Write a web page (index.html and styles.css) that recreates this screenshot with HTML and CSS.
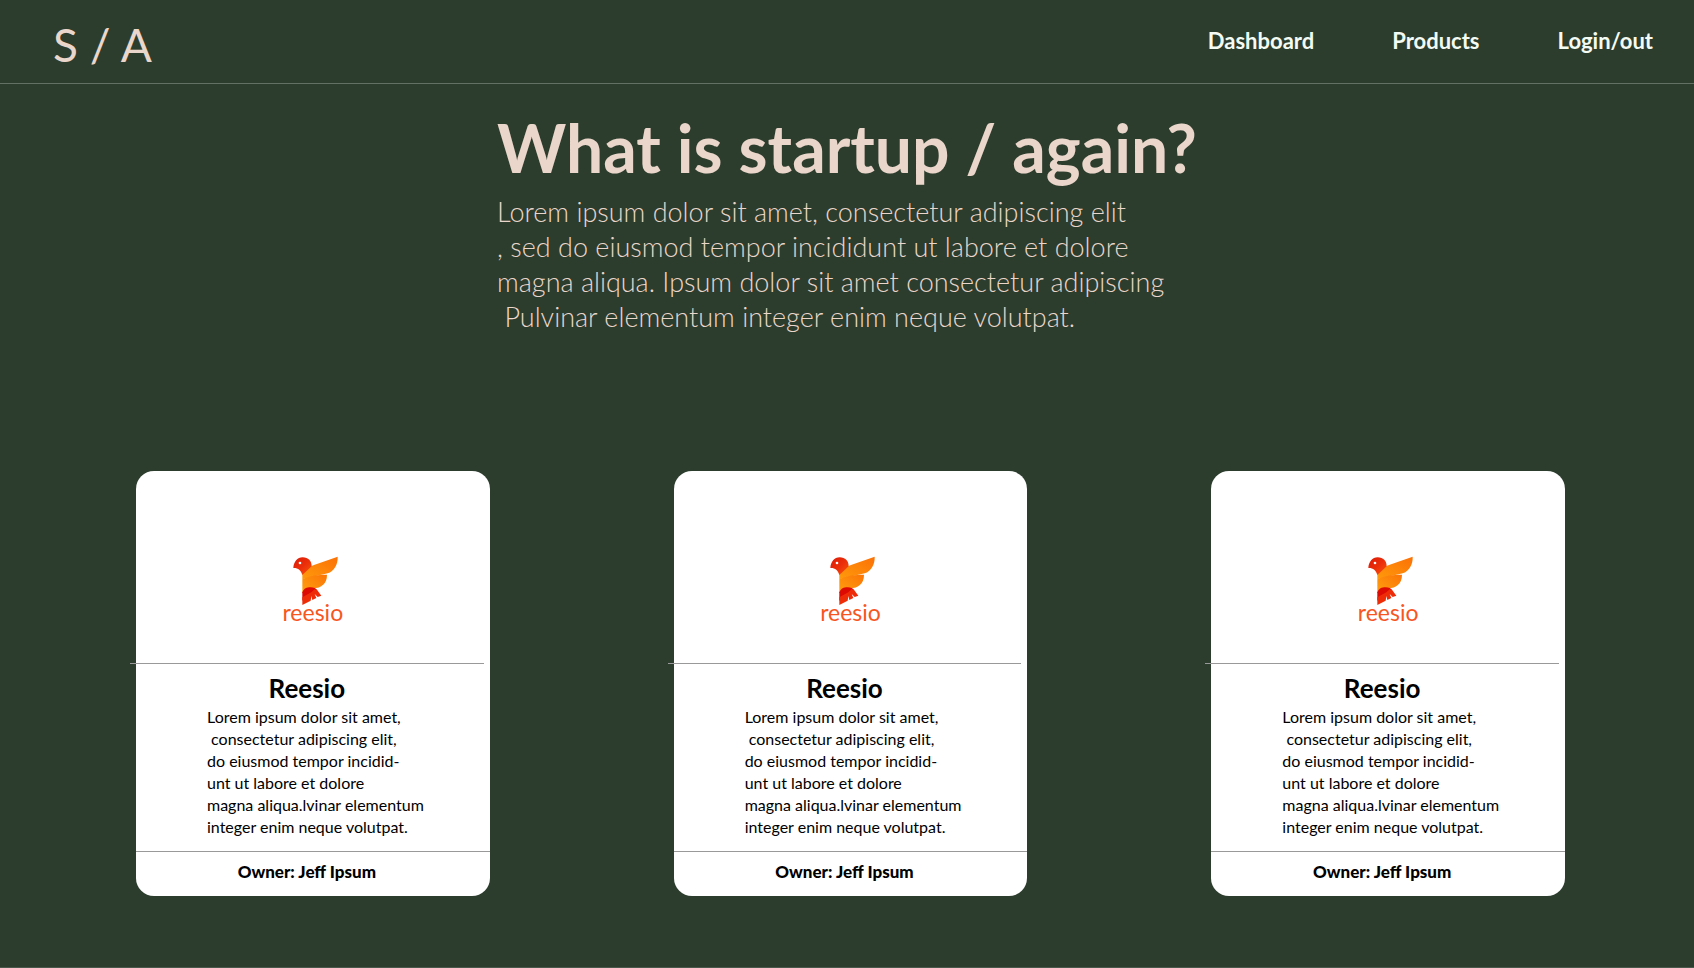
FILE: index.html
```html
<!DOCTYPE html>
<html lang="en">
<head>
<meta charset="utf-8">
<meta name="viewport" content="width=device-width, initial-scale=1">
<title>startup / again</title>
<link rel="stylesheet" href="styles.css">
</head>
<body>
<svg class="defs" width="0" height="0" aria-hidden="true">
  <defs>
    <linearGradient id="head" x1="0" y1="0" x2="1" y2="1"><stop offset="0" stop-color="#dd1a08"/><stop offset=".5" stop-color="#ea2e0a"/><stop offset="1" stop-color="#fb5708"/></linearGradient>
    <linearGradient id="wing" x1="0" y1="1" x2="1" y2="0"><stop offset="0" stop-color="#ff9a0c"/><stop offset="1" stop-color="#fb7106"/></linearGradient>
    <linearGradient id="body" x1="0" y1="1" x2="1" y2="0"><stop offset="0" stop-color="#ffa010"/><stop offset="1" stop-color="#fb7406"/></linearGradient>
    <symbol id="bird" viewBox="-5 18 180 147">
      <path fill="url(#wing)" d="M53 73 C62 60 72 50 88 45 L159 20 C160 44 148 64 129 70 L53 88Z"/>
      <path fill="url(#body)" d="M53 72 L53 130 C62 120 72 116 86 115 C110 114 127 101 127 74 C100 74 76 76 53 88Z"/>
      <path fill="url(#head)" d="M26 54 C27 36 38 22 54 22 C71 22 81 33 81 49 L53 75 C49 60 39 53 26 54Z"/>
      <circle cx="46" cy="39" r="4" fill="#fff"/>
      <path fill="#dc0a03" d="M53 127 C57 116 66 112 78 112 C88 112 94 116 98 121 L53 152Z"/>
      <path fill="#ee2d08" d="M53 142 L80 127 L90 118 L98 121 L110 137 L99 141 L90 132 L95 144 L83 150 L80 138 L78 152 L53 165Z"/>
    </symbol>
  </defs>
</svg>
<header class="topbar">
  <a class="brand" href="#">S / A</a>
  <nav class="nav">
    <a class="nav-link" href="#">Dashboard</a>
    <a class="nav-link" href="#">Products</a>
    <a class="nav-link" href="#">Login/out</a>
  </nav>
</header>
<main>
  <section class="hero">
    <h1 class="hero-title">What is startup / again?</h1>
    <p class="hero-text">Lorem ipsum dolor sit amet, consectetur adipiscing elit<br>, sed do eiusmod tempor incididunt ut labore et dolore<br>magna aliqua. Ipsum dolor sit amet consectetur adipiscing<br>&nbsp;Pulvinar elementum integer enim neque volutpat.</p>
  </section>
  <section class="cards">
    <article class="card">
      <div class="card-logo"><svg class="bird" aria-hidden="true"><use href="#bird"/></svg><span class="wordmark">reesio</span></div>
      <div class="card-body">
        <h2 class="card-title">Reesio</h2>
        <p class="card-text">Lorem ipsum dolor sit amet,<br>&nbsp;consectetur adipiscing elit,<br>do eiusmod tempor incidid-<br>unt ut labore et dolore<br>magna aliqua.lvinar elementum<br>integer enim neque volutpat.</p>
      </div>
      <p class="card-owner">Owner: Jeff Ipsum</p>
    </article>
    <article class="card">
      <div class="card-logo"><svg class="bird" aria-hidden="true"><use href="#bird"/></svg><span class="wordmark">reesio</span></div>
      <div class="card-body">
        <h2 class="card-title">Reesio</h2>
        <p class="card-text">Lorem ipsum dolor sit amet,<br>&nbsp;consectetur adipiscing elit,<br>do eiusmod tempor incidid-<br>unt ut labore et dolore<br>magna aliqua.lvinar elementum<br>integer enim neque volutpat.</p>
      </div>
      <p class="card-owner">Owner: Jeff Ipsum</p>
    </article>
    <article class="card">
      <div class="card-logo"><svg class="bird" aria-hidden="true"><use href="#bird"/></svg><span class="wordmark">reesio</span></div>
      <div class="card-body">
        <h2 class="card-title">Reesio</h2>
        <p class="card-text">Lorem ipsum dolor sit amet,<br>&nbsp;consectetur adipiscing elit,<br>do eiusmod tempor incidid-<br>unt ut labore et dolore<br>magna aliqua.lvinar elementum<br>integer enim neque volutpat.</p>
      </div>
      <p class="card-owner">Owner: Jeff Ipsum</p>
    </article>
  </section>
</main>
</body>
</html>
```
FILE: styles.css
```css
* {
  box-sizing: border-box;
}

body {
  margin: 0;
  min-height: 100vh;
  background: #2c3d2e;
  border-bottom: 1px solid #4a584c;
  color: #ead6ca;
  font-family: Lato, "Open Sans", sans-serif;
}

h1, h2, p {
  margin: 0;
}

.defs {
  position: absolute;
}

.topbar {
  display: flex;
  justify-content: space-between;
  align-items: flex-start;
  padding: 16px 41px 10px 53px;
  border-bottom: 1px solid #637064;
}

.brand {
  color: #ead6ca;
  font-size: 46px;
  font-weight: 400;
  line-height: 57px;
  text-decoration: none;
}

.nav {
  display: flex;
  gap: 78px;
  padding-top: 10px;
}

.nav-link {
  color: #f3fbf3;
  font-size: 22px;
  font-weight: 700;
  line-height: 30px;
  text-decoration: none;
}

.hero {
  width: max-content;
  max-width: 100%;
  margin: 0 auto;
  padding-top: 26px;
}

.hero-title {
  font-size: 66px;
  font-weight: 700;
  line-height: 76px;
}

.hero-text {
  padding-top: 8px;
  font-size: 27px;
  font-weight: 300;
  line-height: 35px;
}

.cards {
  display: grid;
  grid-template-columns: repeat(3, 1fr);
  gap: 184px;
  padding: 137px 129px 64px 136px;
}

.card {
  background: #fff;
  border-radius: 18px;
  color: #000;
}

.card-logo {
  display: flex;
  flex-direction: column;
  align-items: center;
  height: 192px;
  padding-top: 85px;
}

.bird {
  width: 60px;
  height: 49px;
}

.wordmark {
  color: #f8561f;
  font-size: 23px;
  line-height: 14px;
}

.card-body {
  margin: 0 6px 0 -6px;
  padding: 7px 0 13px 77px;
  border-top: 1px solid #999;
}

.card-title {
  margin-left: -77px;
  font-size: 26px;
  font-weight: 700;
  line-height: 35px;
  text-align: center;
}

.card-text {
  font-size: 16px;
  line-height: 22px;
  white-space: nowrap;
}

.card-owner {
  padding: 9px 12px 13px 0;
  border-top: 1px solid #999;
  font-size: 17px;
  font-weight: 900;
  line-height: 22px;
  text-align: center;
}
```
